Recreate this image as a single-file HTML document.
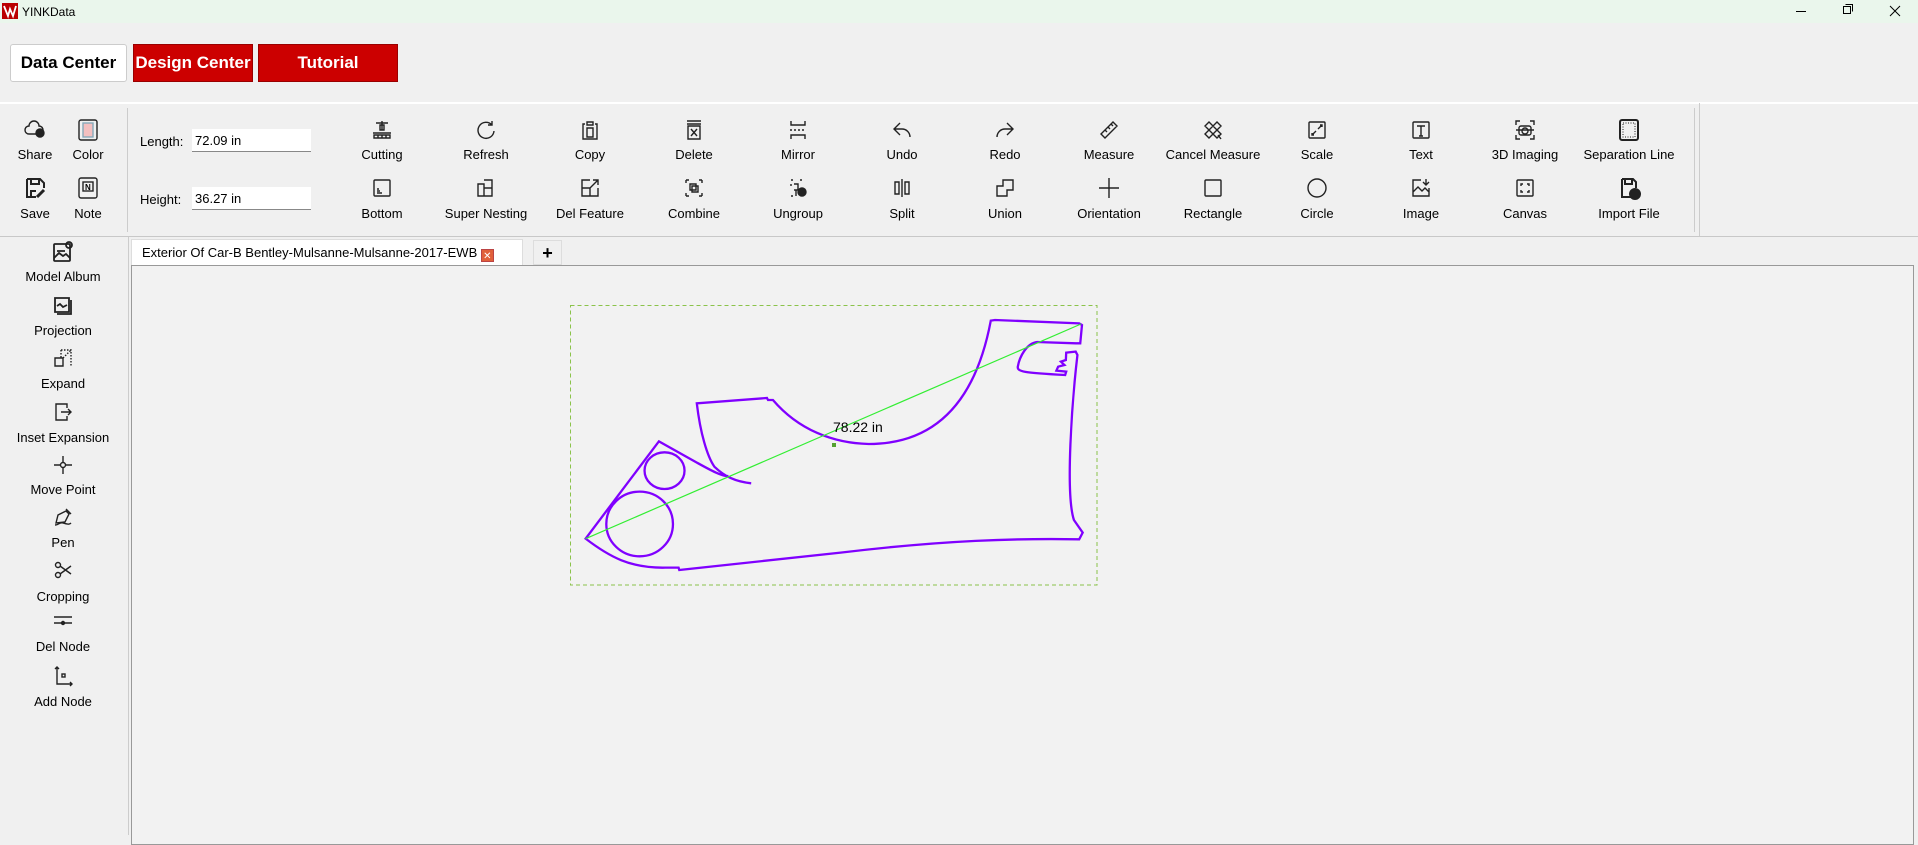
<!DOCTYPE html>
<html><head><meta charset="utf-8"><style>
*{margin:0;padding:0;box-sizing:border-box}
body{width:1918px;height:835px;background:#f0f0f0;font-family:"Liberation Sans",Arial,sans-serif;position:relative;overflow:hidden;color:#000}
.a{position:absolute}
.title{left:0;top:0;width:1918px;height:23px;background:#eaf6ec}
.btn{top:44px;height:38px;font-weight:bold;font-size:17px;display:flex;align-items:center;justify-content:center}
.red{background:#cc0000;color:#fff;border:1px solid #900}
.lbl{font-size:13px;text-align:center;width:110px;margin-left:-55px;white-space:nowrap}
.ic{width:24px;height:24px;margin-left:-12px;margin-top:-12px}
.ic svg{width:24px;height:24px;fill:none;stroke:#222;stroke-width:1.4}
.inp{background:#fff;border-bottom:1px solid #888;height:23px;width:119px;font-size:13px;padding:4px 3px}
</style></head><body>
<div class="a title"></div>
<svg class="a" style="left:2px;top:3px" width="16" height="16" viewBox="0 0 16 16"><rect width="16" height="16" fill="#b00"/><path d="M2 3 L6 13 L8 6 L11 13 L14 3" stroke="#fff" stroke-width="1.8" fill="none"/></svg>
<div class="a" style="left:22px;top:5px;font-size:12px">YINKData</div>
<svg class="a" style="left:1790px;top:0" width="128" height="22" fill="none" stroke="#000" stroke-width="1"><path d="M6 11.5h10"/><rect x="53.5" y="6.5" width="7" height="7"/><path d="M55.5 4.5h7v7"/><path d="M100 6l10 10M110 6l-10 10"/></svg>

<div class="a btn" style="left:10px;width:117px;background:#fff;border:1px solid #ccc;border-radius:3px">Data Center</div>
<div class="a btn red" style="left:133px;width:120px">Design Center</div>
<div class="a btn red" style="left:258px;width:140px">Tutorial</div>

<div class="a" style="left:0;top:102px;width:1918px;height:2px;background:#fff"></div>
<div class="a" style="left:0;top:236px;width:1918px;height:1px;background:#c8c8c8"></div>
<div class="a" style="left:127px;top:108px;width:1px;height:124px;background:#ccc"></div>
<div class="a" style="left:1694px;top:108px;width:1px;height:124px;background:#ccc"></div>
<div class="a" style="left:1699px;top:103px;width:1px;height:133px;background:#ccc"></div>

<div class="a ic" style="left:35px;top:130px"><svg viewBox="0 0 24 24"><path d="M6 16a4 4 0 0 1 0-8 5 5 0 0 1 10 0 3 3 0 0 1 0 8z"/><circle cx="17" cy="15" r="4" fill="#222"/></svg></div>
<div class="a ic" style="left:88px;top:130px"><svg viewBox="0 0 24 24"><rect x="3" y="2" width="18" height="20" rx="2"/><rect x="7" y="5" width="10" height="14" fill="#f4c0c0" stroke="#8ab"/></svg></div>
<div class="a ic" style="left:35px;top:188px"><svg viewBox="0 0 24 24" style="stroke-width:2"><path d="M4 3h13l4 4v5M4 3v18h9M8 3v5h8V3M8 21v-6h5"/><path d="M14 21l7-7" stroke-width="3"/></svg></div>
<div class="a ic" style="left:88px;top:188px"><svg viewBox="0 0 24 24"><rect x="3" y="2" width="18" height="20" rx="2"/><rect x="7" y="6" width="10" height="9"/><text x="9" y="14" font-size="8" fill="#000" stroke="none" font-weight="bold">N</text></svg></div>
<div class="a lbl" style="left:35px;top:147px">Share</div>
<div class="a lbl" style="left:88px;top:147px">Color</div>
<div class="a lbl" style="left:35px;top:206px">Save</div>
<div class="a lbl" style="left:88px;top:206px">Note</div>

<div class="a" style="left:140px;top:134px;font-size:13px">Length:</div>
<div class="a inp" style="left:192px;top:129px">72.09 in</div>
<div class="a" style="left:140px;top:192px;font-size:13px">Height:</div>
<div class="a inp" style="left:192px;top:187px">36.27 in</div>

<div class="a ic" style="left:382px;top:130px"><svg viewBox="0 0 24 24"><path d="M6 5h12M12 3v9M10 7h4v5h-4zM3 15h18M4 17h16v3H4zM8 17v3M12 17v3M16 17v3"/></svg></div>
<div class="a ic" style="left:486px;top:130px"><svg viewBox="0 0 24 24"><path d="M18 7a8 8 0 1 0 2 6M18 3v4h-4"/></svg></div>
<div class="a ic" style="left:590px;top:130px"><svg viewBox="0 0 24 24"><path d="M9 4h6v3H9zM7 6H5v15h14V6h-2M9 10h6v9H9z"/></svg></div>
<div class="a ic" style="left:694px;top:130px"><svg viewBox="0 0 24 24"><path d="M5 3h14M5 6h14M6 8h12v13H6zM9 11l6 7M15 11l-6 7"/></svg></div>
<div class="a ic" style="left:798px;top:130px"><svg viewBox="0 0 24 24"><path d="M5 3v4h14V3M5 21v-4h14v4"/><path d="M4 12h16" stroke-dasharray="2 2"/></svg></div>
<div class="a ic" style="left:902px;top:130px"><svg viewBox="0 0 24 24"><path d="M10 5L4 11l6 6M4 11h8a8 8 0 0 1 8 8"/></svg></div>
<div class="a ic" style="left:1005px;top:130px"><svg viewBox="0 0 24 24"><path d="M14 5l6 6-6 6M20 11h-8a8 8 0 0 0-8 8"/></svg></div>
<div class="a ic" style="left:1109px;top:130px"><svg viewBox="0 0 24 24"><path d="M4 16L16 4l4 4L8 20zM8 12l2 2M11 9l2 2M14 6l2 2"/></svg></div>
<div class="a ic" style="left:1213px;top:130px"><svg viewBox="0 0 24 24"><path d="M4 8l4-4 12 12-4 4zM16 4l4 4L8 20l-4-4zM17 17l3 4"/></svg></div>
<div class="a ic" style="left:1317px;top:130px"><svg viewBox="0 0 24 24"><rect x="4" y="4" width="16" height="16" rx="1"/><path d="M13 11l4-4M15 7h2v2M11 13l-4 4M7 15v2h2"/></svg></div>
<div class="a ic" style="left:1421px;top:130px"><svg viewBox="0 0 24 24"><rect x="4" y="4" width="16" height="16" rx="1"/><path d="M8 8h8M12 8v10M10 18h4"/></svg></div>
<div class="a ic" style="left:1525px;top:130px"><svg viewBox="0 0 24 24"><path d="M3 7V3h4M17 3h4v4M3 17v4h4M21 17v4h-4M3 12h18"/><rect x="6" y="8" width="12" height="9" rx="2"/><circle cx="12" cy="13" r="3"/></svg></div>
<div class="a ic" style="left:1629px;top:130px"><svg viewBox="0 0 24 24" style="stroke-width:2"><rect x="3" y="2" width="18" height="20" rx="2"/><rect x="6" y="5" width="12" height="14" stroke-dasharray="1 1.5" stroke-width="1"/></svg></div>

<div class="a ic" style="left:382px;top:188px"><svg viewBox="0 0 24 24"><rect x="4" y="4" width="16" height="16" rx="1"/><path d="M7 13h2M7 15h3M7 17h5"/></svg></div>
<div class="a ic" style="left:486px;top:188px"><svg viewBox="0 0 24 24"><path d="M4 8h6v12H4zM10 4h8v16h-8M10 12h8"/></svg></div>
<div class="a ic" style="left:590px;top:188px"><svg viewBox="0 0 24 24"><path d="M12 4H4v16h16v-8M15 4h5v5M20 4l-8 8M4 12h8v8"/></svg></div>
<div class="a ic" style="left:694px;top:188px"><svg viewBox="0 0 24 24"><path d="M4 4h3M4 4v3M20 4h-3M20 4v3M4 20h3M4 20v-3M20 20h-3M20 20v-3"/><path d="M8 8h6v6H8zM10 10h6v6h-6z"/></svg></div>
<div class="a ic" style="left:798px;top:188px"><svg viewBox="0 0 24 24"><path d="M5 4h2M14 4h2M5 20h2M5 8v2M8 8h4v6H8M10 14v6"/><circle cx="16" cy="16" r="4" fill="#222"/></svg></div>
<div class="a ic" style="left:902px;top:188px"><svg viewBox="0 0 24 24"><path d="M5 6h4v12H5zM15 6h4v12h-4zM12 3v18"/></svg></div>
<div class="a ic" style="left:1005px;top:188px"><svg viewBox="0 0 24 24"><path d="M10 4h10v10h-6v6H4V10h6z"/></svg></div>
<div class="a ic" style="left:1109px;top:188px"><svg viewBox="0 0 24 24"><path d="M12 2v20M2 12h20"/></svg></div>
<div class="a ic" style="left:1213px;top:188px"><svg viewBox="0 0 24 24"><rect x="4" y="4" width="16" height="16" rx="1"/></svg></div>
<div class="a ic" style="left:1317px;top:188px"><svg viewBox="0 0 24 24"><circle cx="12" cy="12" r="9"/></svg></div>
<div class="a ic" style="left:1421px;top:188px"><svg viewBox="0 0 24 24"><path d="M12 4H4v16h16v-8M4 16l5-5 4 4 3-3 4 4M17 3v6M14 6l3 3 3-3"/></svg></div>
<div class="a ic" style="left:1525px;top:188px"><svg viewBox="0 0 24 24"><rect x="4" y="4" width="16" height="16" rx="1"/><path d="M8 10V8h2M14 8h2v2M16 14v2h-2M10 16H8v-2"/></svg></div>
<div class="a ic" style="left:1629px;top:188px"><svg viewBox="0 0 24 24" style="stroke-width:2"><path d="M5 3h11l3 3v6M5 3v18h9M8 3v5h7V3"/><circle cx="18" cy="18" r="5" fill="#222"/></svg></div>

<div class="a lbl" style="left:382px;top:147px">Cutting</div>
<div class="a lbl" style="left:486px;top:147px">Refresh</div>
<div class="a lbl" style="left:590px;top:147px">Copy</div>
<div class="a lbl" style="left:694px;top:147px">Delete</div>
<div class="a lbl" style="left:798px;top:147px">Mirror</div>
<div class="a lbl" style="left:902px;top:147px">Undo</div>
<div class="a lbl" style="left:1005px;top:147px">Redo</div>
<div class="a lbl" style="left:1109px;top:147px">Measure</div>
<div class="a lbl" style="left:1213px;top:147px">Cancel Measure</div>
<div class="a lbl" style="left:1317px;top:147px">Scale</div>
<div class="a lbl" style="left:1421px;top:147px">Text</div>
<div class="a lbl" style="left:1525px;top:147px">3D Imaging</div>
<div class="a lbl" style="left:1629px;top:147px">Separation Line</div>
<div class="a lbl" style="left:382px;top:206px">Bottom</div>
<div class="a lbl" style="left:486px;top:206px">Super Nesting</div>
<div class="a lbl" style="left:590px;top:206px">Del Feature</div>
<div class="a lbl" style="left:694px;top:206px">Combine</div>
<div class="a lbl" style="left:798px;top:206px">Ungroup</div>
<div class="a lbl" style="left:902px;top:206px">Split</div>
<div class="a lbl" style="left:1005px;top:206px">Union</div>
<div class="a lbl" style="left:1109px;top:206px">Orientation</div>
<div class="a lbl" style="left:1213px;top:206px">Rectangle</div>
<div class="a lbl" style="left:1317px;top:206px">Circle</div>
<div class="a lbl" style="left:1421px;top:206px">Image</div>
<div class="a lbl" style="left:1525px;top:206px">Canvas</div>
<div class="a lbl" style="left:1629px;top:206px">Import File</div>

<div class="a" style="left:128px;top:237px;width:1px;height:598px;background:#ccc"></div>
<div class="a ic" style="left:63px;top:252px"><svg viewBox="0 0 24 24" style="stroke-width:1.8"><rect x="3" y="4" width="16" height="17" rx="1"/><path d="M3 18l5-5 4 3 3-2 4 4M6 11h8"/><circle cx="18" cy="5" r="3"/></svg></div>
<div class="a ic" style="left:63px;top:306px"><svg viewBox="0 0 24 24" style="stroke-width:1.8"><path d="M4 4h14v14H4zM6 20h14V6" /><path d="M6 12l3-2 3 3 4-2"/></svg></div>
<div class="a ic" style="left:63px;top:358px"><svg viewBox="0 0 24 24"><path d="M10 4h10v16M10 4v8M12 12l8-8" stroke-dasharray="1.5 1.5"/><path d="M4 12h8v8H4z"/></svg></div>
<div class="a ic" style="left:63px;top:412px"><svg viewBox="0 0 24 24"><path d="M16 8V4H5v16h11v-4M10 12h10M17 9l3 3-3 3"/></svg></div>
<div class="a ic" style="left:63px;top:465px"><svg viewBox="0 0 24 24"><circle cx="12" cy="12" r="2.5"/><path d="M12 3v6M12 15v6M3 12h6M15 12h6"/></svg></div>
<div class="a ic" style="left:63px;top:517px"><svg viewBox="0 0 24 24"><path d="M5 18l2-8 8-4 3 3-4 8zM15 4l5 5M4 20c4 0 4-3 8-2s6 2 8 0"/></svg></div>
<div class="a ic" style="left:63px;top:570px"><svg viewBox="0 0 24 24"><circle cx="7" cy="7" r="2.5"/><circle cx="7" cy="17" r="2.5"/><path d="M9 8l11 8M9 16l11-8"/></svg></div>
<div class="a ic" style="left:63px;top:621px"><svg viewBox="0 0 24 24"><path d="M3 8h18M3 14h18"/><circle cx="12" cy="14" r="1.5" fill="#222"/></svg></div>
<div class="a ic" style="left:63px;top:676px"><svg viewBox="0 0 24 24"><path d="M6 3v17h15M4 5l2-2 2 2M19 18l2 2-2 2"/><rect x="11" y="10" width="3" height="3"/></svg></div>
<div class="a lbl" style="left:63px;top:269px">Model Album</div>
<div class="a lbl" style="left:63px;top:323px">Projection</div>
<div class="a lbl" style="left:63px;top:376px">Expand</div>
<div class="a lbl" style="left:63px;top:430px">Inset Expansion</div>
<div class="a lbl" style="left:63px;top:482px">Move Point</div>
<div class="a lbl" style="left:63px;top:535px">Pen</div>
<div class="a lbl" style="left:63px;top:589px">Cropping</div>
<div class="a lbl" style="left:63px;top:639px">Del Node</div>
<div class="a lbl" style="left:63px;top:694px">Add Node</div>

<div class="a" style="left:131px;top:239px;width:392px;height:26px;background:#fff;border:1px solid #ddd;border-bottom:none;font-size:13px;padding:5px 10px;white-space:nowrap">Exterior Of Car-B Bentley-Mulsanne-Mulsanne-2017-EWB <span style="display:inline-block;width:13px;height:13px;background:#e0603a;color:#fff;font-size:10px;line-height:13px;text-align:center;vertical-align:-2px;border:1px solid #b44">✕</span></div>
<div class="a" style="left:533px;top:240px;width:29px;height:25px;background:#f0f0f0;border:1px solid #ddd;font-size:18px;text-align:center;font-weight:bold;line-height:24px">+</div>
<div class="a" style="left:131px;top:265px;width:1783px;height:580px;border:1px solid #999;background:#f2f2f2"></div>

<svg class="a" style="left:0;top:0" width="1918" height="835">
<rect x="570.5" y="305.5" width="526.5" height="279.5" fill="none" stroke="#8bc34a" stroke-width="1" stroke-dasharray="4 3"/>
<g transform="translate(560,300) scale(0.3508,0.3333)" fill="none" stroke="#8000ff" stroke-width="2.3">
<path vector-effect="non-scaling-stroke" d="M545,550 C500,545 470,530 440,500 C420,470 400,400 390,310 L590,294 L593,300 L607,300 C680,390 780,430 880,432 C1050,432 1180,330 1228,62 L1240,60 L1480,70 L1488,75 L1483,130 L1470,130 L1360,126 C1330,130 1310,170 1305,200 C1303,215 1320,218 1440,225 L1443,215 L1415,212 L1420,200 L1438,195 L1428,185 L1442,180 L1443,158 L1470,155 L1475,165 C1460,300 1440,580 1465,660 L1490,698 L1480,718 C1300,715 1100,720 800,758 L340,810 L338,803 L300,803 C200,805 140,770 73,716 L282,424 L380,482 C420,505 460,530 480,528"/>
<ellipse vector-effect="non-scaling-stroke" cx="298" cy="512" rx="57" ry="55"/>
<ellipse vector-effect="non-scaling-stroke" cx="227" cy="672" rx="95" ry="97"/>
</g>
<line x1="585.6" y1="538.7" x2="1081" y2="324" stroke="#33ee33" stroke-width="1.2"/>
<rect x="832" y="443" width="4" height="4" fill="#55a030"/>
<text x="833" y="432" font-size="14" font-family="Liberation Sans,sans-serif">78.22 in</text>
</svg>
</body></html>
